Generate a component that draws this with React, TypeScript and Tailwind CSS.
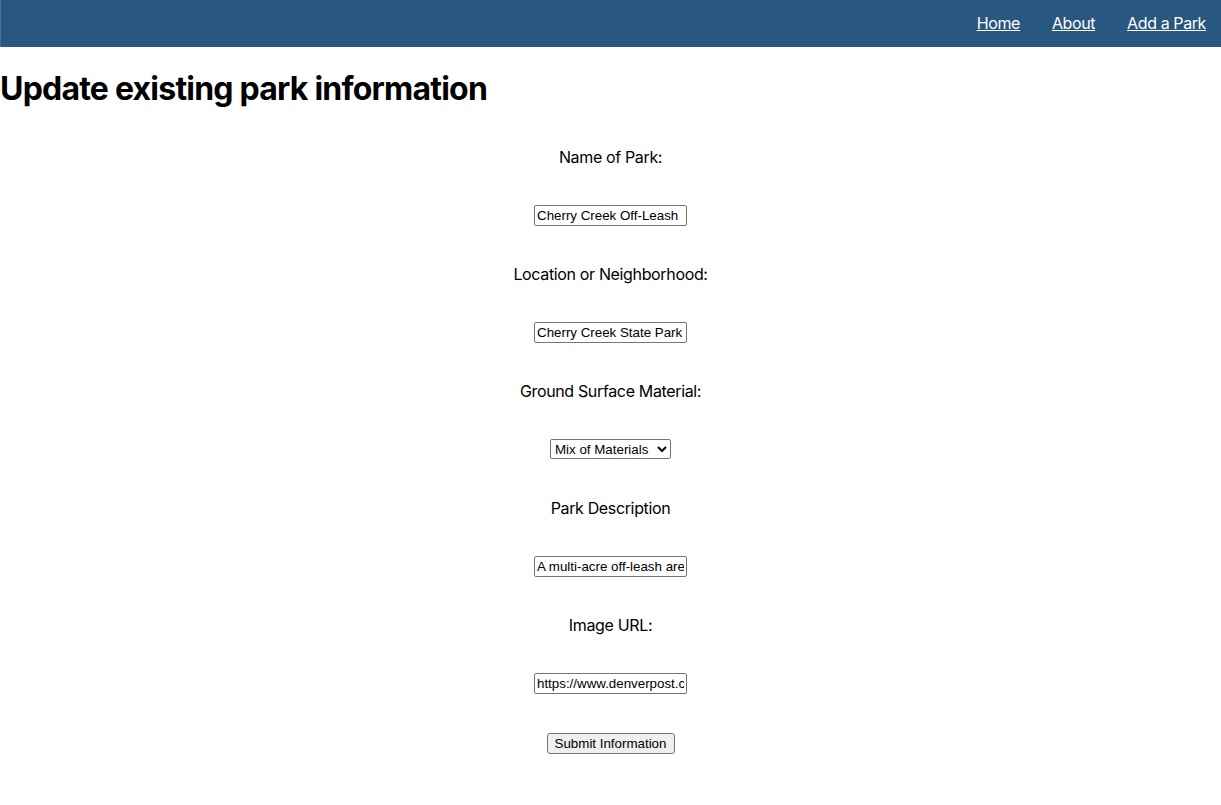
import React from 'react';

const inputCls =
  "w-[153px] h-[21px] border border-[#767676] rounded-[2px] px-[2px] text-[13.33px] leading-[15px] text-black bg-white [font-family:'Liberation_Sans',Arial,sans-serif]";

function Field({ label, children }: { label: string; children: React.ReactNode }) {
  return (
    <>
      <label className="block h-6 leading-6 text-base tracking-[-0.35px]">{label}</label>
      {children}
    </>
  );
}

function App() {
  return (
    <div className="min-h-screen bg-white text-black [font-family:Inter,'Noto_Sans',sans-serif]">
      {/* Nav bar */}
      <nav className="h-[47px] bg-[#28577f] flex items-center justify-end gap-8 pr-[15px] pb-[2px] border-l border-[#4a7296]">
        <a href="#" className="text-white underline text-base tracking-[-0.4px]">Home</a>
        <a href="#" className="text-white underline text-base tracking-[-0.4px]">About</a>
        <a href="#" className="text-white underline text-base tracking-[-0.4px]">Add a Park</a>
      </nav>

      <h1 className="text-[32px] font-bold leading-[38px] mt-[23px] tracking-[-0.78px]">
        Update existing park information
      </h1>

      <form className="flex flex-col items-center gap-[36.1px] pt-[37px] pb-12">
        <Field label="Name of Park:">
          <input className={inputCls} defaultValue="Cherry Creek Off-Leash" />
        </Field>
        <Field label="Location or Neighborhood:">
          <input className={inputCls} defaultValue="Cherry Creek State Park" />
        </Field>
        <Field label="Ground Surface Material:">
          <select
            defaultValue="mix"
            className="w-[121px] h-[20px] border border-[#767676] rounded-[2px] text-[13.33px] text-black bg-white [font-family:'Liberation_Sans',Arial,sans-serif]"
          >
            <option value="grass">Grass</option>
            <option value="dirt">Dirt</option>
            <option value="mix">Mix of Materials</option>
          </select>
        </Field>
        <Field label="Park Description">
          <input className={inputCls} defaultValue="A multi-acre off-leash area with a creek" />
        </Field>
        <Field label="Image URL:">
          <input className={inputCls} defaultValue="https://www.denverpost.com/park.jpg" />
        </Field>
        <button
          type="button"
          className="mt-[3px] w-[128px] h-[21px] bg-[#efefef] border border-[#767676] rounded-[3px] text-[13.33px] text-black [font-family:'Liberation_Sans',Arial,sans-serif]"
        >
          Submit Information
        </button>
      </form>
    </div>
  );
}

export default App;
